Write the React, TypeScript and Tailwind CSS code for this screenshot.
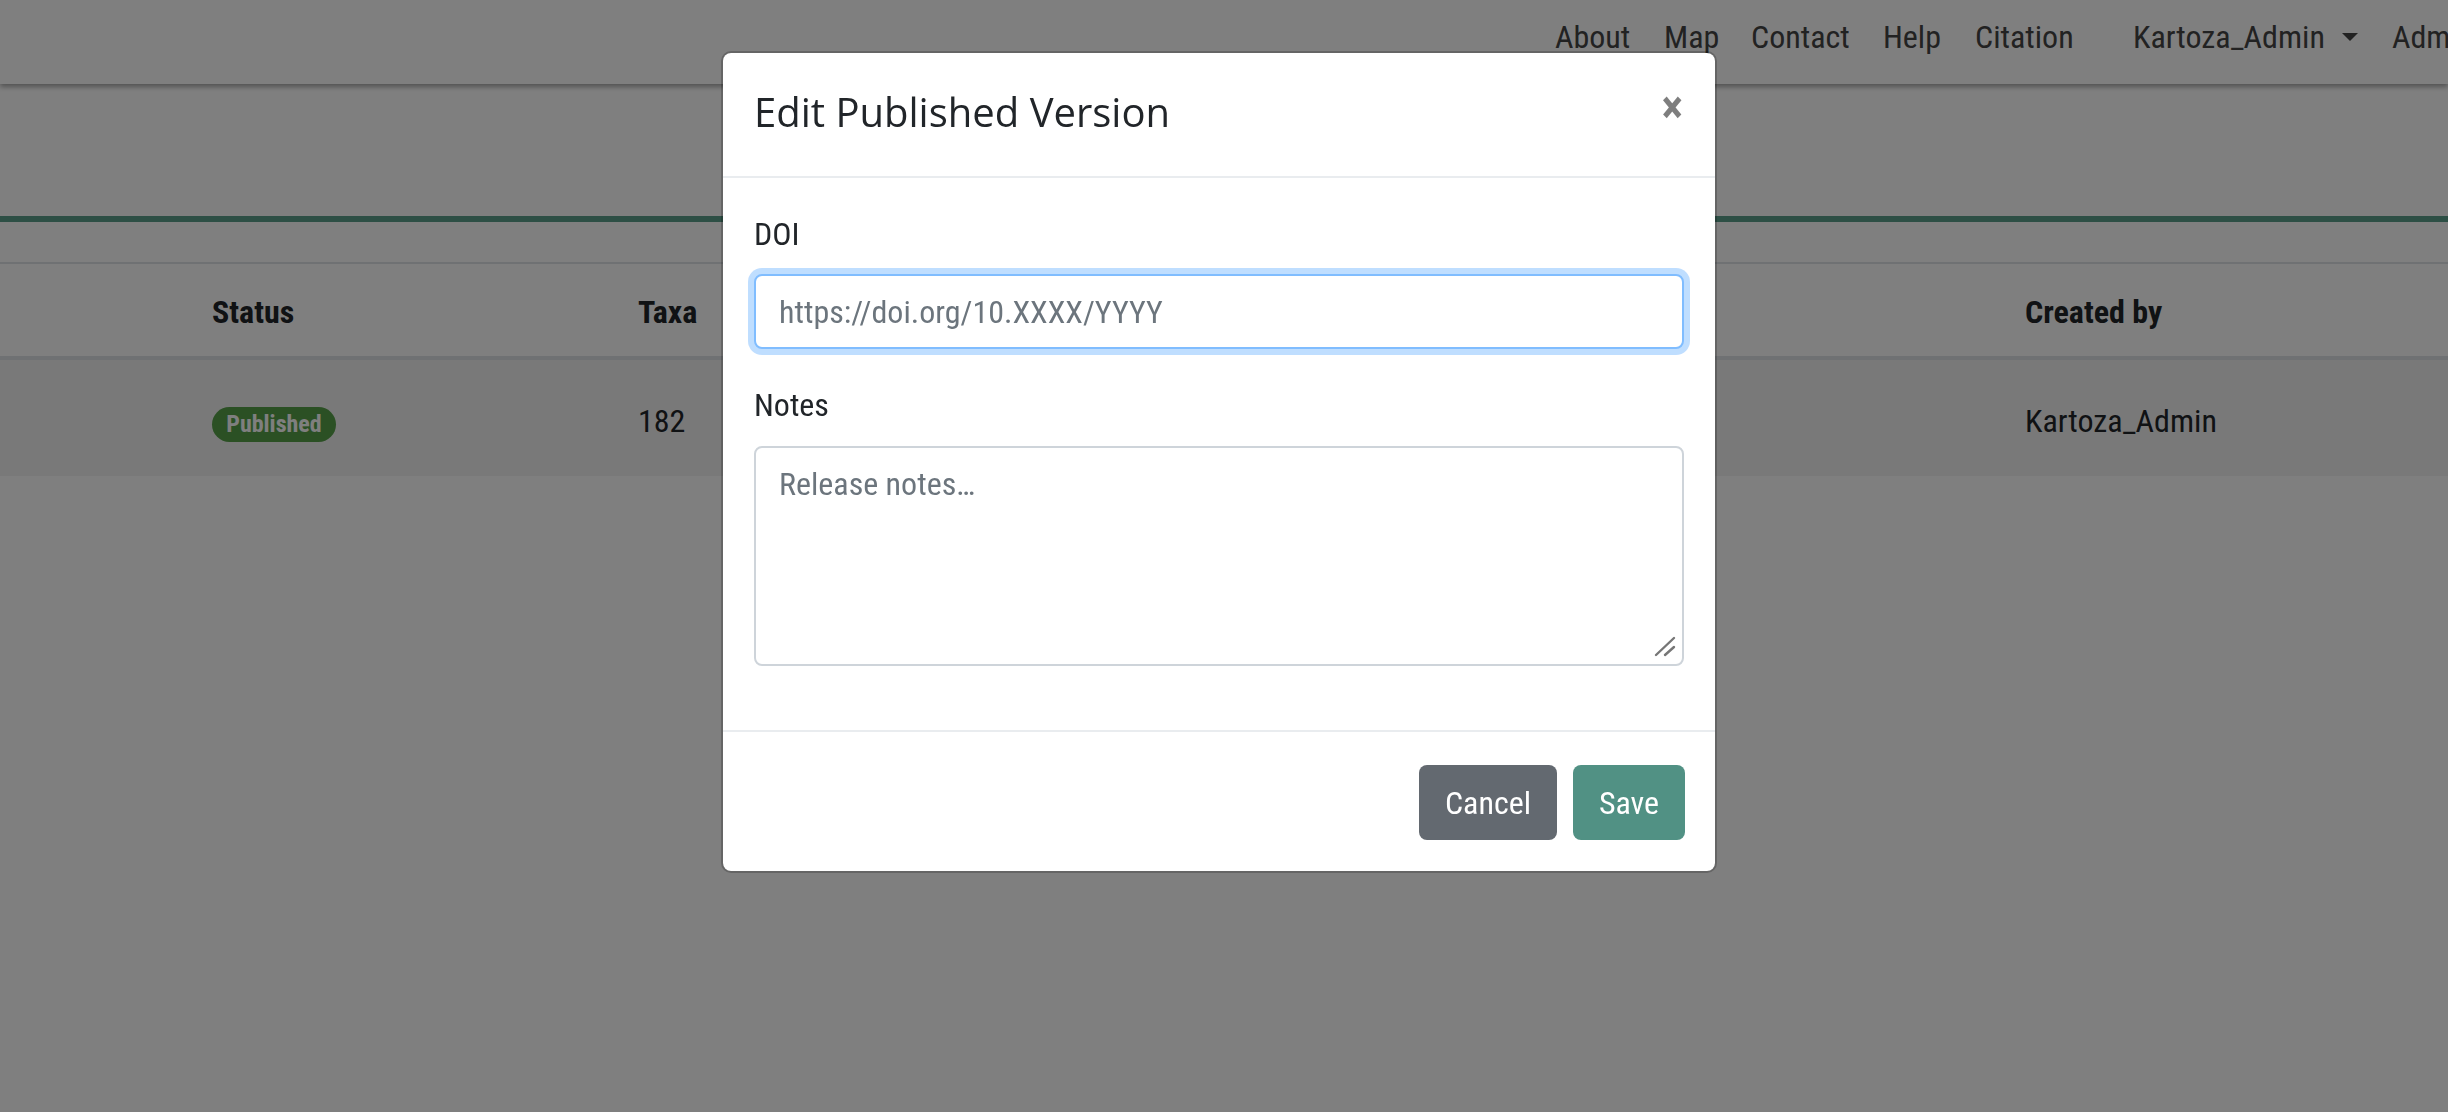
import React from "react"

const cond = "[font-family:'Roboto_Condensed','Liberation_Sans_Narrow',Roboto,sans-serif]"

const navLinks = [
  { label: "About", width: "w-[109px]" },
  { label: "Map", width: "w-[87px]" },
  { label: "Contact", width: "w-[132px]" },
  { label: "Help", width: "w-[92px]" },
  { label: "Citation", width: "w-[158px]" },
]

function Navbar() {
  return (
    <nav className="relative z-10 h-[84px] bg-white shadow-[0_3px_5px_rgba(0,0,0,0.35)] overflow-hidden">
      <div className="flex whitespace-nowrap pl-[1555px] pt-[14px] text-[32px] leading-[46px] text-[#454545]">
        {navLinks.map((l) => (
          <div key={l.label} className={`${l.width} shrink-0`}>
            {l.label}
          </div>
        ))}
        <div className="flex w-[259px] shrink-0 items-center">
          <span className="w-[209px] shrink-0">Kartoza_Admin</span>
          <span className="h-0 w-0 border-x-[8px] border-t-[8px] border-x-transparent border-t-[#454545]" />
        </div>
        <div className="shrink-0">Admin</div>
      </div>
    </nav>
  )
}

function VersionsTable() {
  return (
    <div>
      <div className="h-[132px]" />
      <div className="h-[6px] bg-[#5a9e8a]" />
      <div className="mt-[40px] border-t-2 border-[#dee2e6]">
        <div className="grid h-[96px] grid-cols-[212px_426px_1387px_1fr] items-center border-b-4 border-[#dee2e6] pt-[4px] font-bold">
          <div />
          <div>Status</div>
          <div>Taxa</div>
          <div>Created by</div>
        </div>
        <div className="grid h-[116px] grid-cols-[212px_426px_1387px_1fr] items-center bg-[#f2f2f2] pt-[6px]">
          <div />
          <div>
            <span className="inline-flex h-[35px] w-[124px] items-center justify-center rounded-full bg-[#56a049] text-[24px] font-bold leading-none text-white">
              Published
            </span>
          </div>
          <div>182</div>
          <div>Kartoza_Admin</div>
        </div>
      </div>
    </div>
  )
}

function EditModal() {
  return (
    <div className="absolute left-[721px] top-[51px] z-30 w-[996px] rounded-[10px] border-2 border-black/20 bg-white bg-clip-padding">
      {/* Header */}
      <div className="flex h-[125px] items-start justify-between border-b-2 border-[#e9ecef] px-[31px]">
        <h5 className="mt-[29px] [font-family:'Open_Sans','Noto_Sans',sans-serif] text-[40px] font-normal leading-[60px] text-[#212529]">
          Edit Published Version
        </h5>
        <button className="mt-[31px] mr-[1px] text-[46px] font-bold leading-none text-black opacity-50">
          ×
        </button>
      </div>

      {/* Body */}
      <div className="px-[31px] pb-[64px] pt-[32px]">
        <label className="block text-[32px] leading-[48px] text-[#212529]">DOI</label>
        <input
          type="text"
          placeholder="https://doi.org/10.XXXX/YYYY"
          className={`mt-[16px] block h-[75px] w-full rounded-[8px] border-2 border-[#80bdff] bg-white px-[23px] text-[32px] text-[#495057] shadow-[0_0_0_6px_rgba(0,123,255,0.25)] outline-none placeholder:text-[#6c757d] ${cond}`}
        />
        <label className="mt-[32px] block text-[32px] leading-[48px] text-[#212529]">Notes</label>
        <div className="relative mt-[17px]">
          <textarea
            placeholder="Release notes…"
            className={`block h-[220px] w-full resize-none rounded-[8px] border-2 border-[#ced4da] bg-white px-[23px] py-[12px] text-[32px] leading-[48px] text-[#495057] outline-none placeholder:text-[#6c757d] ${cond}`}
          />
          <svg className="absolute bottom-[9px] right-[8px] h-[22px] w-[22px]" viewBox="0 0 22 22" fill="none">
            <path d="M2 20 L20 3 M11 20 L20 12" stroke="#767676" strokeWidth="2.4" strokeLinecap="round" />
          </svg>
        </div>
      </div>

      {/* Footer */}
      <div className="flex justify-end gap-[16px] border-t-2 border-[#e9ecef] pb-[31px] pl-[31px] pr-[30px] pt-[33px]">
        <button className="h-[75px] w-[138px] rounded-[8px] bg-[#636970] text-[32px] text-white">
          Cancel
        </button>
        <button className="h-[75px] w-[112px] rounded-[8px] bg-[#519184] text-[32px] text-white">
          Save
        </button>
      </div>
    </div>
  )
}

export default function App() {
  return (
    <div className={`relative h-[1112px] overflow-hidden bg-white text-[32px] leading-[48px] text-[#212529] ${cond}`}>
      <Navbar />
      <VersionsTable />
      <div className="fixed inset-0 z-20 bg-black/50" />
      <EditModal />
    </div>
  )
}
